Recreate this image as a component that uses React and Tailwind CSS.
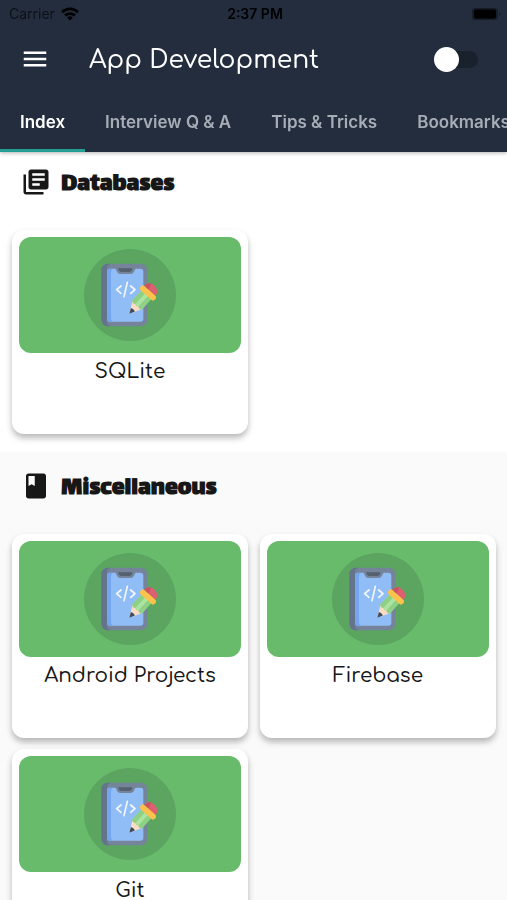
import React, { useState } from 'react';
import { MdClass, MdLibraryBooks, MdMenu } from 'react-icons/md';

const tabs = ['Index', 'Interview Q & A', 'Tips & Tricks', 'Bookmarks'];

const sections = [
  {
    title: 'Databases',
    icon: MdLibraryBooks,
    className: 'bg-white',
    items: ['SQLite'],
  },
  {
    title: 'Miscellaneous',
    icon: MdClass,
    className: 'bg-neutral-50',
    items: ['Android Projects', 'Firebase', 'Git'],
  },
];

const WifiIcon = () => (
  <svg viewBox="0 0 18 14" className="h-3.5 w-[18px]" fill="none" stroke="#000" strokeWidth="2.8" aria-hidden="true">
    <path d="M1 5.2a11.5 11.5 0 0 1 16 0" />
    <path d="M4 8.6a7.2 7.2 0 0 1 10 0" />
    <path d="M9 13.6 6.1 10.7a4.1 4.1 0 0 1 5.8 0z" fill="#000" stroke="none" />
  </svg>
);

const BatteryIcon = () => (
  <svg viewBox="0 0 30 14" className="h-3.5 w-[30px]" aria-hidden="true">
    <rect x="1" y="1" width="26" height="12" rx="3.5" fill="#151c27" />
    <rect x="3" y="2.5" width="22" height="9" rx="2" fill="#000" />
    <path d="M28.2 5v4c1.6-.6 1.6-3.4 0-4z" fill="#151c27" />
  </svg>
);

const PhoneArt = () => (
  <svg viewBox="27 28 276 276" className="size-[92px]" aria-hidden="true">
    <circle cx="165" cy="166" r="138" fill="#5ba560" />
    {/* Phone body */}
    <rect x="79" y="72" width="138" height="188" rx="19" fill="#75849a" />
    <path d="M98 72a19 19 0 0 0-19 19v150a19 19 0 0 0 19 19h12a14 14 0 0 1-14-14V86a14 14 0 0 1 14-14z" fill="#64748a" />
    {/* Screen */}
    <path d="M105 87h15c3 0 4 3 5 7 2 6 6 9 12 9h29c6 0 10-3 12-9 1-4 2-7 5-7h13q9 0 9 9v141q0 9-9 9h-91q-9 0-9-9V96q0-9 9-9z" fill="#91bdf7" />
    <path d="M105 87h9q-6 3-6 11v137q0 8 6 11h-9q-9 0-9-9V96q0-9 9-9z" fill="#75a5ef" />
    <path d="M130 86h42c0 8-4 11-10 11h-22c-6 0-10-3-10-11z" fill="#56616f" />
    {/* Code mark */}
    <path d="m138 139-13 11 13 11M167 139l13 11-13 11M157 128l-10 43" fill="none" stroke="#f3f7ff" strokeWidth="5" strokeLinecap="round" strokeLinejoin="round" />
    {/* Pencil */}
    <g transform="translate(163 222) rotate(42)">
      <path d="M0 0-19-36h38z" fill="#fbdcc5" />
      <path d="m0 0-8-16q8-4 16 0z" fill="#3f4c5b" />
      <path d="M-20-34v-44h40v44q-7 6-14 0-6 5-12 0-6 6-14 0z" fill="#8ed184" />
      <path d="M-6-34v-44H6v44q-6 5-12 0z" fill="#abe3a0" />
      <path d="M-23-88q0-25 23-25t23 25z" fill="#dc6070" />
      <path d="M-23-88q0-18 11-23l8 23z" fill="#c95262" />
      <rect x="-29" y="-92" width="58" height="17" rx="8" fill="#fbc34c" />
    </g>
  </svg>
);

const TopicCard = ({ title }) => (
  <a
    href="#"
    className="block h-[204px] rounded-xl bg-white p-[7px] shadow-[0_4px_6px_rgba(0,0,0,0.28)]"
  >
    <div className="flex h-[116px] items-center justify-center rounded-xl bg-[#67bb6b]">
      <PhoneArt />
    </div>
    <h3 className="mt-1 text-center font-[Comfortaa,Quicksand,sans-serif] text-xl leading-[30px] font-medium text-neutral-900">
      {title}
    </h3>
  </a>
);

const Section = ({ title, icon: Icon, items, className }) => (
  <section className={`pt-4 pr-[11px] pb-[18px] pl-3 ${className}`}>
    <h2 className="mb-[30px] flex h-9 items-center gap-2.5 pl-[9px] font-[Lalezar,Roboto,sans-serif] text-[26px] font-bold text-neutral-900">
      <Icon className="size-[30px]" />
      <span className="pt-1.5">{title}</span>
    </h2>
    <div className="grid grid-cols-2 gap-x-3 gap-y-[11px]">
      {items.map((item) => (
        <TopicCard key={item} title={item} />
      ))}
    </div>
  </section>
);

const App = () => {
  const [activeTab, setActiveTab] = useState('Index');
  const [dark, setDark] = useState(false);

  return (
    <div className="flex h-screen flex-col overflow-hidden bg-neutral-50 font-[Inter,sans-serif]">
      <header className="relative z-10 shrink-0 bg-[#232d3d] shadow-[0_1px_4px_rgba(0,0,0,0.3)]">
        {/* Status bar */}
        <div className="grid h-7 grid-cols-3 items-center pr-1.5 pl-[9px] text-sm text-black">
          <div className="flex items-center gap-1.5 text-[#0c1118]">
            Carrier
            <WifiIcon />
          </div>
          <span className="text-center font-semibold">2:37 PM</span>
          <div className="flex justify-end">
            <BatteryIcon />
          </div>
        </div>

        {/* Title row */}
        <div className="flex h-[62px] items-center pr-7 pl-5 text-white">
          <button type="button" aria-label="Open menu">
            <MdMenu className="size-[30px]" />
          </button>
          <h1 className="ml-[39px] flex-1 pt-1 font-[Comfortaa,Quicksand,sans-serif] text-[25px] font-medium">App Development</h1>
          <label className="relative flex h-[25px] w-[45px] cursor-pointer items-center">
            <input
              type="checkbox"
              role="switch"
              aria-label="Dark mode"
              checked={dark}
              onChange={(e) => setDark(e.target.checked)}
              className="peer ml-1 h-[17px] w-10 cursor-pointer appearance-none rounded-full bg-[#18212c]"
            />
            <span className="absolute left-0 size-[25px] rounded-full bg-white transition-transform peer-checked:translate-x-5" />
          </label>
        </div>

        {/* Tabs */}
        <nav className="flex h-[62px] overflow-hidden">
          {tabs.map((tab) => (
            <button
              key={tab}
              type="button"
              onClick={() => setActiveTab(tab)}
              className={`shrink-0 border-b-[3px] px-5 pt-1.5 text-[17px] font-semibold whitespace-nowrap ${
                activeTab === tab ? 'border-[#269e93] text-white' : 'border-transparent text-[#a7adb6]'
              }`}
            >
              {tab}
            </button>
          ))}
        </nav>
      </header>

      <main className="-mt-1 min-h-0 flex-1 overflow-y-auto [scrollbar-width:none]">
        {sections.map((section) => (
          <Section key={section.title} {...section} />
        ))}
      </main>
    </div>
  );
};

export default App;
